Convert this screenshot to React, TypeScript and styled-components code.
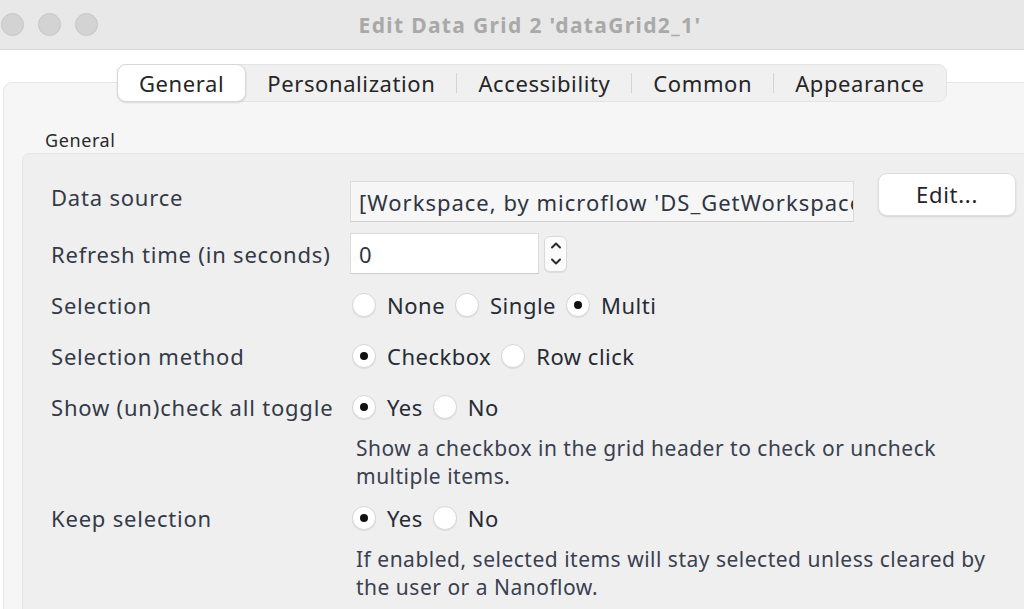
import React from 'react';
import styled, { createGlobalStyle } from 'styled-components';

const GlobalStyle = createGlobalStyle`
  html, body {
    margin: 0;
    padding: 0;
    background: #ffffff;
    overflow: hidden;
  }
  body {
    font-family: 'Noto Sans', 'Liberation Sans', sans-serif;
    color: #343a47;
  }
`;

const Window = styled.div`
  width: 1024px;
  height: 609px;
  overflow: hidden;
  background: #ffffff;
`;

const TitleBar = styled.div`
  height: 49px;
  display: flex;
  align-items: center;
  background: #e8e8e8;
  border-bottom: 1px solid #d9d9d9;
  padding-left: 1px;
`;

const Lights = styled.div`
  display: flex;
  gap: 14px;
`;

const Light = styled.span`
  width: 21px;
  height: 21px;
  border-radius: 50%;
  background: #d3d3d3;
  border: 1px solid #c6c6c6;
`;

const Title = styled.div`
  flex: 1;
  text-align: center;
  padding-right: 62px;
  font-family: 'Noto Sans', 'Liberation Sans', sans-serif;
  font-weight: bold;
  font-size: 21px;
  letter-spacing: 1.35px;
  color: #a9a9a9;
`;

const Content = styled.div`
  padding: 32px 0 0 3px;
`;

const Panel = styled.div`
  width: 1060px;
  height: 560px;
  background: #f6f6f6;
  border: 1px solid #e6e6e6;
  border-radius: 9px;
  box-sizing: border-box;
`;

const TabBar = styled.div`
  display: flex;
  width: fit-content;
  align-items: center;
  margin: -19px 0 0 113px;
  height: 38px;
  box-sizing: border-box;
  background: #f0f0f0;
  border: 1px solid #e4e4e4;
  border-radius: 9px;
`;

const Tab = styled.div<{ $active?: boolean }>`
  height: 38px;
  box-sizing: border-box;
  display: flex;
  align-items: center;
  padding: 0 21px;
  font-size: 22px;
  letter-spacing: 0.6px;
  color: #262626;
  margin: -1px 0;
  ${(p) =>
    p.$active
      ? `
    background: #ffffff;
    border: 1px solid #d7d7d7;
    border-radius: 9px;
    box-shadow: 0 1px 2px rgba(0,0,0,0.12);
    margin-left: -1px;
  `
      : ''}
`;

const Sep = styled.span`
  width: 1px;
  height: 20px;
  background: #d4d4d4;
`;

const GroupLabel = styled.div`
  margin: 25px 0 0 41px;
  font-size: 18px;
  letter-spacing: 0.6px;
  color: #2a2a2a;
  line-height: 26px;
`;

const Group = styled.div`
  margin: 0 0 0 18px;
  background: #efefef;
  border: 1px solid #e5e5e5;
  border-radius: 7px;
  padding: 17px 0 0 28px;
  height: 500px;
  box-sizing: border-box;
`;

const Row = styled.div<{ $gap?: number }>`
  display: grid;
  grid-template-columns: 299px auto 1fr;
  align-items: center;
  min-height: 51px;
  margin-top: ${(p) => p.$gap ?? 0}px;
`;

const Label = styled.div`
  font-size: 22px;
  letter-spacing: 0.8px;
  color: #343a47;
  white-space: nowrap;
`;

const TextField = styled.div<{ $width: number; $white?: boolean; $shift?: number }>`
  width: ${(p) => p.$width}px;
  height: 41px;
  box-sizing: border-box;
  display: flex;
  align-items: center;
  padding-left: 8px;
  overflow: hidden;
  white-space: nowrap;
  background: ${(p) => (p.$white ? '#ffffff' : '#f6f6f6')};
  border: 1px solid #dcdcdc;
  border-bottom-color: #cfcfcf;
  margin-top: ${(p) => p.$shift ?? 0}px;
  font-size: 22px;
  letter-spacing: 1px;
  color: #2f3542;
`;

const EditButton = styled.button`
  justify-self: start;
  margin: -5px 0 0 24px;
  width: 138px;
  height: 43px;
  background: #ffffff;
  border: 1px solid #dedede;
  border-radius: 9px;
  box-shadow: 0 1px 2px rgba(0, 0, 0, 0.12);
  font-family: 'Noto Sans', 'Liberation Sans', sans-serif;
  font-size: 22px;
  letter-spacing: 0.7px;
  color: #1f2430;
`;

const FieldGroup = styled.div`
  display: flex;
  align-items: center;
  gap: 5px;
`;

const Stepper = styled.div`
  width: 23px;
  height: 36px;
  box-sizing: border-box;
  border: 1px solid #dadada;
  border-radius: 6px;
  background: #fbfbfb;
  display: flex;
  flex-direction: column;
  align-items: center;
  justify-content: space-around;
  box-shadow: 0 1px 1px rgba(0, 0, 0, 0.08);
`;

const Radios = styled.div`
  display: flex;
  align-items: center;
`;

const Option = styled.span`
  display: flex;
  align-items: center;
  margin-right: 8px;
`;

const RadioDot = styled.span<{ $on?: boolean }>`
  width: 24px;
  height: 24px;
  margin-left: 2px;
  box-sizing: border-box;
  border-radius: 50%;
  background: #ffffff;
  border: 1px solid #d6d6d6;
  box-shadow: 0 1px 1px rgba(0, 0, 0, 0.08);
  display: flex;
  align-items: center;
  justify-content: center;
  &::after {
    content: '';
    width: 8px;
    height: 8px;
    border-radius: 50%;
    background: ${(p) => (p.$on ? '#111111' : 'transparent')};
  }
`;

const OptionText = styled.span`
  margin-left: 11px;
  font-size: 22px;
  letter-spacing: 0.5px;
  color: #262b35;
`;

const Help = styled.div`
  margin: 2px 0 0 305px;
  font-size: 21px;
  letter-spacing: 0.5px;
  line-height: 28px;
  color: #3a4050;
  width: 640px;
`;

const Chevron = ({ up }: { up?: boolean }) => (
  <svg width="12" height="8" viewBox="0 0 12 8">
    <path
      d={up ? 'M2 6.5 L6 2.5 L10 6.5' : 'M2 1.5 L6 5.5 L10 1.5'}
      fill="none"
      stroke="#2b2b2b"
      strokeWidth="2"
      strokeLinecap="round"
      strokeLinejoin="round"
    />
  </svg>
);

type Opt = { text: string; on?: boolean };

const RadioSet = ({ options }: { options: Opt[] }) => (
  <Radios>
    {options.map((o) => (
      <Option key={o.text}>
        <RadioDot $on={o.on} />
        <OptionText>{o.text}</OptionText>
      </Option>
    ))}
  </Radios>
);

const tabs = ['General', 'Personalization', 'Accessibility', 'Common', 'Appearance'];

export default function App() {
  return (
    <Window>
      <GlobalStyle />
      <TitleBar>
        <Lights>
          <Light />
          <Light />
          <Light />
        </Lights>
        <Title>Edit Data Grid 2 'dataGrid2_1'</Title>
      </TitleBar>
      <Content>
        <Panel>
          <TabBar>
            {tabs.map((t, i) => (
              <React.Fragment key={t}>
                {i > 1 && <Sep />}
                <Tab $active={i === 0}>{t}</Tab>
              </React.Fragment>
            ))}
          </TabBar>
          <GroupLabel>General</GroupLabel>
          <Group>
            <Row>
              <Label>Data source</Label>
              <TextField $width={504} $shift={10}>
                [Workspace, by microflow 'DS_GetWorkspace']
              </TextField>
              <EditButton>Edit...</EditButton>
            </Row>
            <Row $gap={6}>
              <Label>Refresh time (in seconds)</Label>
              <FieldGroup>
                <TextField $width={189} $white>
                  0
                </TextField>
                <Stepper>
                  <Chevron up />
                  <Chevron />
                </Stepper>
              </FieldGroup>
            </Row>
            <Row>
              <Label>Selection</Label>
              <RadioSet
                options={[{ text: 'None' }, { text: 'Single' }, { text: 'Multi', on: true }]}
              />
            </Row>
            <Row>
              <Label>Selection method</Label>
              <RadioSet options={[{ text: 'Checkbox', on: true }, { text: 'Row click' }]} />
            </Row>
            <Row>
              <Label>Show (un)check all toggle</Label>
              <RadioSet options={[{ text: 'Yes', on: true }, { text: 'No' }]} />
            </Row>
            <Help>Show a checkbox in the grid header to check or uncheck multiple items.</Help>
            <Row $gap={2}>
              <Label>Keep selection</Label>
              <RadioSet options={[{ text: 'Yes', on: true }, { text: 'No' }]} />
            </Row>
            <Help>
              If enabled, selected items will stay selected unless cleared by the user or a
              Nanoflow.
            </Help>
          </Group>
        </Panel>
      </Content>
    </Window>
  );
}
